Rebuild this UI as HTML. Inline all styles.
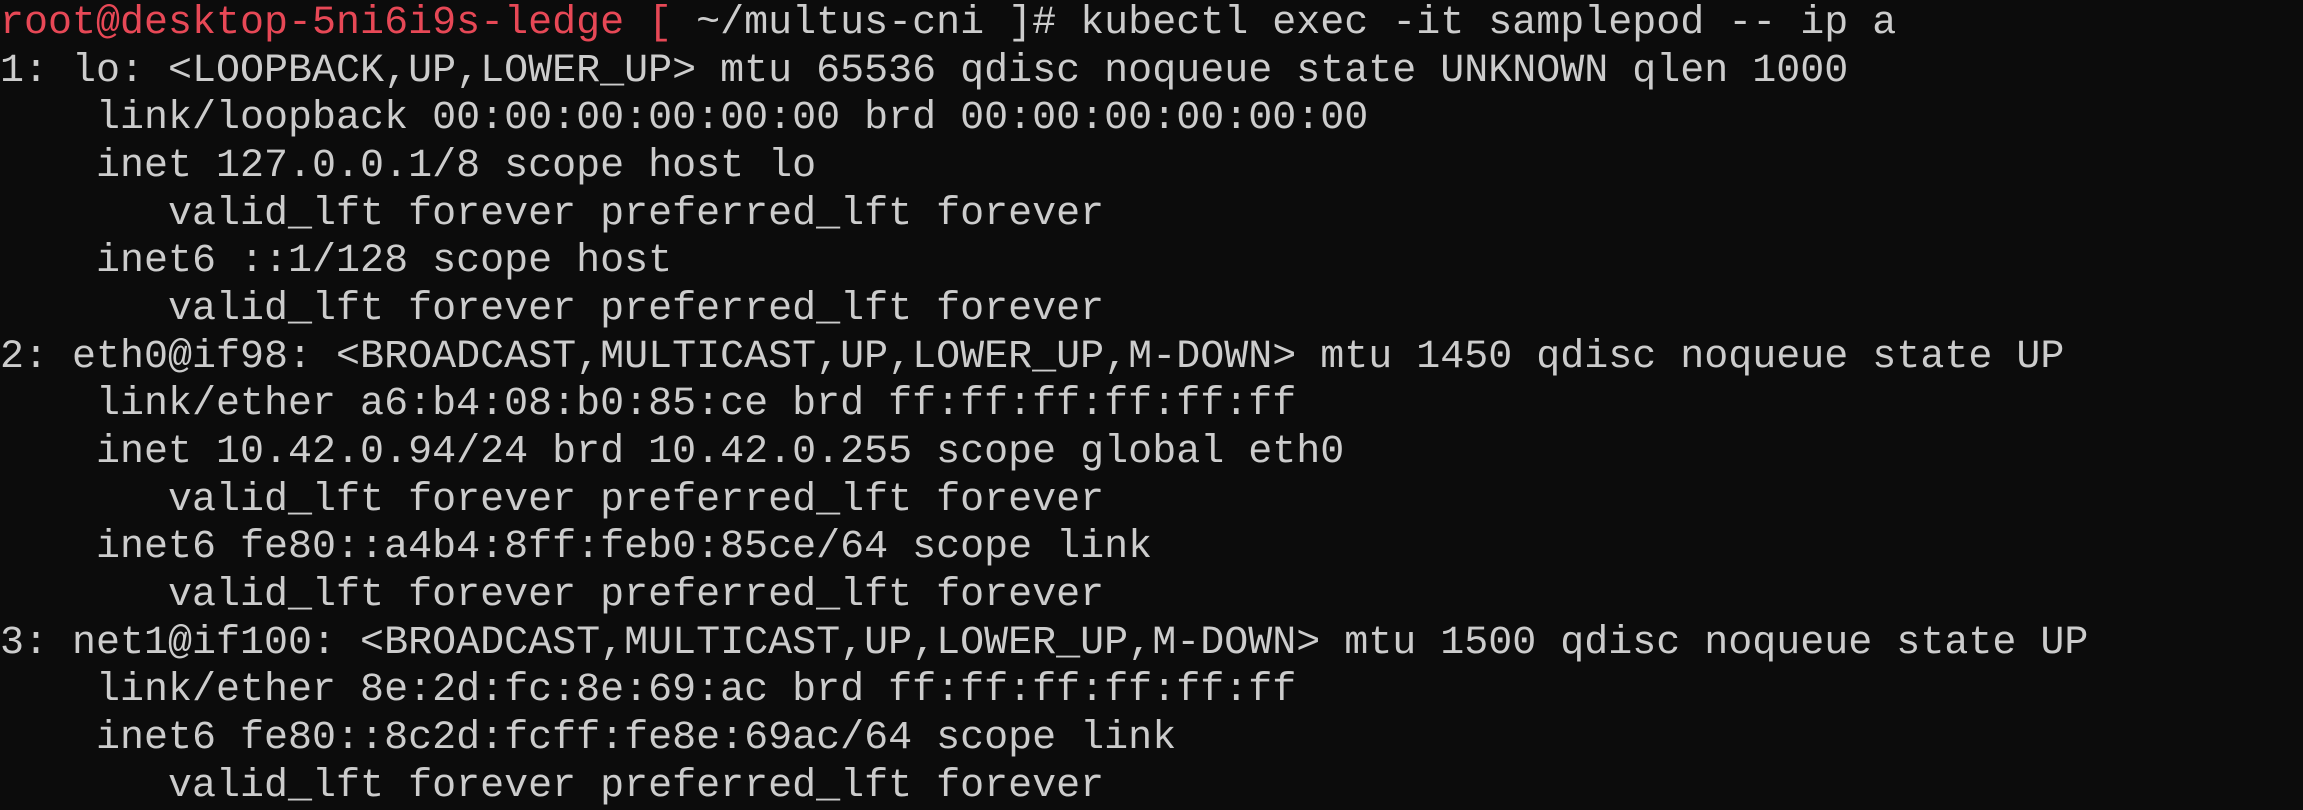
<!DOCTYPE html>
<html><head><meta charset="utf-8"><style>
html,body{margin:0;padding:0;background:#0c0c0c;width:2303px;height:806px;overflow:hidden}
pre{margin:0;position:absolute;left:0;top:0px;font-family:"Liberation Mono",monospace;font-size:40px;line-height:47.65px;color:#cccccc;letter-spacing:0}
.r{color:#e74856}
</style></head><body><pre><span class="r">root@desktop-5ni6i9s-ledge [</span> ~/multus-cni ]# kubectl exec -it samplepod -- ip a
1: lo: &lt;LOOPBACK,UP,LOWER_UP&gt; mtu 65536 qdisc noqueue state UNKNOWN qlen 1000
    link/loopback 00:00:00:00:00:00 brd 00:00:00:00:00:00
    inet 127.0.0.1/8 scope host lo
       valid_lft forever preferred_lft forever
    inet6 ::1/128 scope host
       valid_lft forever preferred_lft forever
2: eth0@if98: &lt;BROADCAST,MULTICAST,UP,LOWER_UP,M-DOWN&gt; mtu 1450 qdisc noqueue state UP
    link/ether a6:b4:08:b0:85:ce brd ff:ff:ff:ff:ff:ff
    inet 10.42.0.94/24 brd 10.42.0.255 scope global eth0
       valid_lft forever preferred_lft forever
    inet6 fe80::a4b4:8ff:feb0:85ce/64 scope link
       valid_lft forever preferred_lft forever
3: net1@if100: &lt;BROADCAST,MULTICAST,UP,LOWER_UP,M-DOWN&gt; mtu 1500 qdisc noqueue state UP
    link/ether 8e:2d:fc:8e:69:ac brd ff:ff:ff:ff:ff:ff
    inet6 fe80::8c2d:fcff:fe8e:69ac/64 scope link
       valid_lft forever preferred_lft forever</pre></body></html>
